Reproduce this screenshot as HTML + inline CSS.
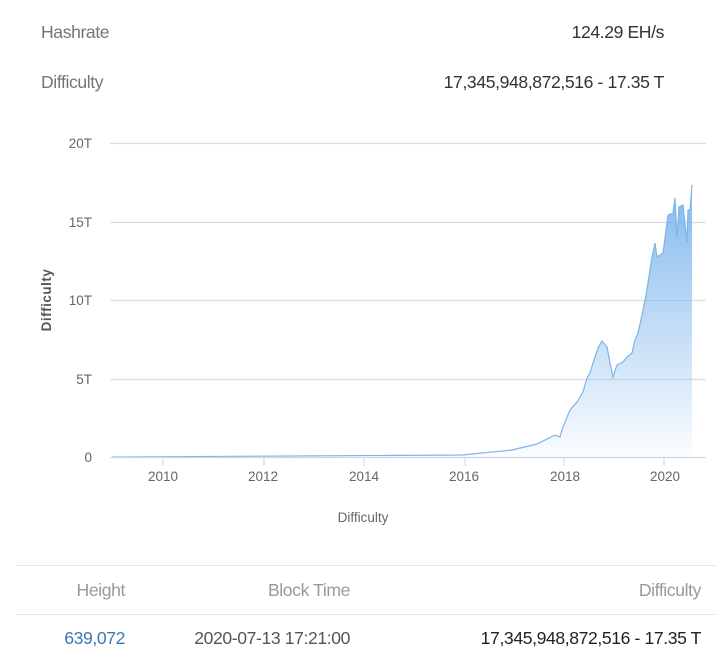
<!DOCTYPE html>
<html><head><style>
body{margin:0;width:717px;height:663px;background:#fff;font-family:"Liberation Sans",sans-serif;overflow:hidden;position:relative}
.t{position:absolute;font-size:17.6px;letter-spacing:-0.4px}
.g{color:#757575}.d{color:#333}
</style></head><body>
<div class="t g" style="left:41px;top:22px">Hashrate</div>
<div class="t d" style="right:53px;top:22px">124.29 EH/s</div>
<div class="t g" style="left:41px;top:72px">Difficulty</div>
<div class="t d" style="right:53px;top:72px">17,345,948,872,516 - 17.35 T</div>
<svg width="717" height="540" style="position:absolute;left:0;top:0" font-family="Liberation Sans,sans-serif">
<defs><linearGradient id="gr" x1="0" y1="0" x2="0" y2="1"><stop offset="0" stop-color="#7cb5ec" stop-opacity="0.95"/><stop offset="1" stop-color="#7cb5ec" stop-opacity="0.03"/></linearGradient></defs>
<g stroke="#dcdcdc" stroke-width="1.2">
<line x1="110" y1="143.5" x2="706" y2="143.5"/><line x1="110" y1="222.5" x2="706" y2="222.5"/><line x1="110" y1="300.5" x2="706" y2="300.5"/><line x1="110" y1="379.5" x2="706" y2="379.5"/>
</g>
<g font-size="13.5" fill="#666" text-anchor="end">
<text x="92" y="148">20T</text><text x="92" y="227">15T</text><text x="92" y="305">10T</text><text x="92" y="384">5T</text><text x="92" y="462">0</text>
</g>
<text transform="translate(51,300) rotate(-90)" font-size="13.5" fill="#555" text-anchor="middle" font-weight="bold" letter-spacing="0.5">Difficulty</text>
<path d="M112,457 L462,455 L512,450 L537,444 L555,435 L560,437 L563,427 L570,410 L577,402 L583,392 L587,378 L590,373 L593,363 L598,348 L602,341 L607,347 L610,363 L613,377 L617,365 L623,362 L627,357 L632,353 L635,340 L638,333 L642,315 L645,300 L648,283 L652,257 L655,243 L657,257 L660,255 L663,253 L668,215 L673,213 L675,198 L677,238 L679,207 L683,205 L687,242 L688,210 L690,210 L692,185 L692,457 Z" fill="url(#gr)"/>
<path d="M112,457 L462,455 L512,450 L537,444 L555,435 L560,437 L563,427 L570,410 L577,402 L583,392 L587,378 L590,373 L593,363 L598,348 L602,341 L607,347 L610,363 L613,377 L617,365 L623,362 L627,357 L632,353 L635,340 L638,333 L642,315 L645,300 L648,283 L652,257 L655,243 L657,257 L660,255 L663,253 L668,215 L673,213 L675,198 L677,238 L679,207 L683,205 L687,242 L688,210 L690,210 L692,185" fill="none" stroke="#7cb5ec" stroke-width="1.2"/>
<line x1="110" y1="457.5" x2="706" y2="457.5" stroke="#ccd6eb" stroke-width="1.2"/>
<g stroke="#ccd6eb"><line x1="163" y1="457" x2="163" y2="466"/><line x1="264" y1="457" x2="264" y2="466"/><line x1="364" y1="457" x2="364" y2="466"/><line x1="465" y1="457" x2="465" y2="466"/><line x1="564" y1="457" x2="564" y2="466"/><line x1="664" y1="457" x2="664" y2="466"/></g>
<g font-size="13.5" fill="#666" text-anchor="middle">
<text x="163" y="481">2010</text><text x="263" y="481">2012</text><text x="364" y="481">2014</text><text x="464" y="481">2016</text><text x="565" y="481">2018</text><text x="665" y="481">2020</text>
</g>
<text x="363" y="522" font-size="13.5" fill="#666" text-anchor="middle">Difficulty</text>
</svg>
<div style="position:absolute;left:16px;right:0;top:565px;border-top:1px solid #e8e8e8"></div>
<div style="position:absolute;left:16px;right:0;top:614px;border-top:1px solid #e8e8e8"></div>
<div class="t" style="right:592px;top:580px;color:#999">Height</div>
<div class="t" style="right:367px;top:580px;color:#999">Block Time</div>
<div class="t" style="right:16px;top:580px;color:#999">Difficulty</div>
<div class="t" style="right:592px;top:628px;color:#3a78b5">639,072</div>
<div class="t g" style="right:367px;top:628px;color:#555">2020-07-13 17:21:00</div>
<div class="t d" style="right:16px;top:628px;color:#222">17,345,948,872,516 - 17.35 T</div>
</body></html>
